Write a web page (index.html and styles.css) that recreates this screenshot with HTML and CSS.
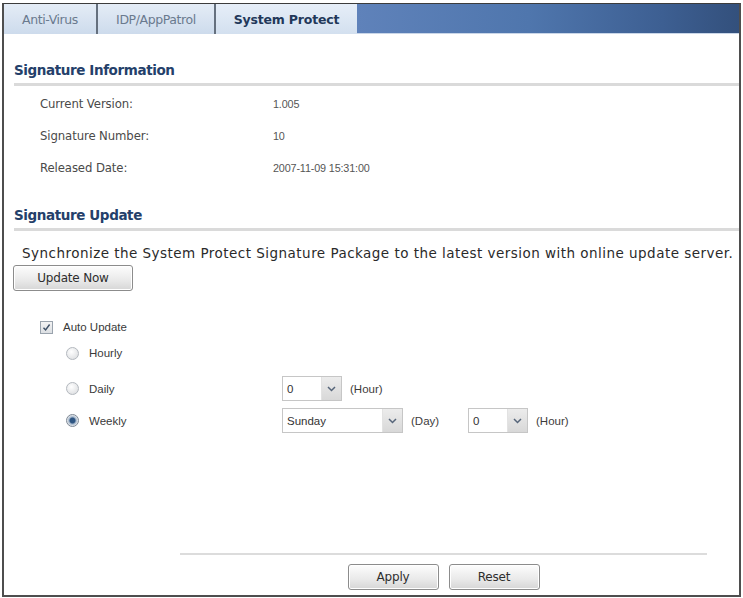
FILE: index.html
```html
<!DOCTYPE html>
<html lang="en">
<head>
    <meta charset="UTF-8">
    <title>System Protect</title>
    <link rel="stylesheet" href="styles.css">
</head>
<body>

<div class="panel">

    <div class="tabs">
        <div class="tab tab-av">Anti-Virus</div>
        <div class="tab tab-idp">IDP/AppPatrol</div>
        <div class="tab tab-sp active">System Protect</div>
        <div class="tab-fill"></div>
    </div>

    <div class="content">

        <h2 class="section-title">Signature Information</h2>
        <div class="info-row"><span class="info-label">Current Version:</span><span class="info-val">1.005</span></div>
        <div class="info-row"><span class="info-label">Signature Number:</span><span class="info-val">10</span></div>
        <div class="info-row"><span class="info-label">Released Date:</span><span class="info-val">2007-11-09 15:31:00</span></div>

        <h2 class="section-title title-update">Signature Update</h2>
        <p class="sync-text">Synchronize the System Protect Signature Package to the latest version with online update server.</p>
        <button type="button" class="btn btn-update">Update Now</button>

        <div class="auto-row">
            <span class="checkbox checked">
                <svg width="9" height="9" viewBox="0 0 9 9"><path d="M1.5 4.8 L3.6 7 L7.6 1.5" fill="none" stroke="#3d4f66" stroke-width="1.4"/></svg>
            </span>
            <span>Auto Update</span>
        </div>

        <div class="sched">
            <div class="sched-row row-hourly">
                <div class="opt"><span class="radio"></span>Hourly</div>
            </div>
            <div class="sched-row row-daily">
                <div class="opt"><span class="radio"></span>Daily</div>
                <div class="ctrls">
                    <div class="select sel-small"><span class="sel-val">0</span><span class="sel-arrow"><svg width="9" height="6" viewBox="0 0 9 6"><path d="M1 1 L4.5 4.5 L8 1" fill="none" stroke="#56657a" stroke-width="1.5"/></svg></span></div>
                    <span class="unit">(Hour)</span>
                </div>
            </div>
            <div class="sched-row row-weekly">
                <div class="opt"><span class="radio selected"></span>Weekly</div>
                <div class="ctrls">
                    <div class="select sel-wide"><span class="sel-val">Sunday</span><span class="sel-arrow"><svg width="9" height="6" viewBox="0 0 9 6"><path d="M1 1 L4.5 4.5 L8 1" fill="none" stroke="#56657a" stroke-width="1.5"/></svg></span></div>
                    <span class="unit unit-day">(Day)</span>
                    <div class="select sel-small"><span class="sel-val">0</span><span class="sel-arrow"><svg width="9" height="6" viewBox="0 0 9 6"><path d="M1 1 L4.5 4.5 L8 1" fill="none" stroke="#56657a" stroke-width="1.5"/></svg></span></div>
                    <span class="unit">(Hour)</span>
                </div>
            </div>
        </div>

    </div>

    <div class="footer">
        <div class="footer-line"></div>
        <div class="footer-btns">
            <button type="button" class="btn btn-foot">Apply</button>
            <button type="button" class="btn btn-foot">Reset</button>
        </div>
    </div>

</div>

</body>
</html>
```

FILE: styles.css
```css
body {
    margin: 0;
    background: #ffffff;
    font-family: "Liberation Sans", Arial, sans-serif;
    font-size: 11.5px;
    color: #3a3a3a;
}

.panel {
    box-sizing: border-box;
    margin: 3px 0 0 2px;
    width: 739px;
    height: 594px;
    border: 2px solid #4e4e4e;
    border-top: 1px solid #3c3c3c;
    display: flex;
    flex-direction: column;
}

/* tab strip */
.tabs {
    display: flex;
    height: 30px;
}
.tab {
    display: flex;
    align-items: center;
    justify-content: center;
    background: linear-gradient(#e4ecf6, #cddbec);
    color: #6a7a8e;
    border-right: 2px solid #65707e;
    font-family: "DejaVu Sans", Verdana, sans-serif;
    font-size: 12.5px;
    letter-spacing: -0.4px;
}
.tab-av { width: 92px; }
.tab-idp { width: 116px; }
.tab-sp { width: 141px; border-right: none; }
.tab.active {
    font-weight: bold;
    color: #22385a;
    font-size: 12.5px;
    letter-spacing: -0.2px;
    background: linear-gradient(#e6eef8, #d3e0ef);
}
.tab-fill {
    flex: 1;
    background: linear-gradient(90deg, #5f82ba, #4f76ad 45%, #3d5f92 80%, #33507c);
    border-bottom: 1px solid #c9d6e8;
}

.content {
    flex: 1;
    padding: 0 0 0 10px;
}

.section-title {
    margin: 28px 0 0 0;
    padding: 0 0 5px 0;
    font-family: "DejaVu Sans", Verdana, sans-serif;
    font-size: 13.5px;
    line-height: 16px;
    font-weight: bold;
    color: #24406a;
    border-bottom: 3px solid #dadada;
    letter-spacing: -0.4px;
}
.title-update { margin-top: 23px; }

.info-row {
    display: flex;
    height: 32px;
    align-items: center;
    padding-left: 26px;
    color: #4a4a4a;
}
.info-row:first-of-type { margin-top: 2px; }
.info-label {
    width: 233px;
    font-family: "DejaVu Sans", Verdana, sans-serif;
    font-size: 11.7px;
    letter-spacing: -0.1px;
}
.info-val { font-size: 10.8px; letter-spacing: -0.15px; color: #555555; }

.sync-text {
    margin: 14px 0 0 8px;
    font-family: "DejaVu Sans", Verdana, sans-serif;
    font-size: 13.5px;
    letter-spacing: 0.47px;
    line-height: 16px;
    color: #2a2a2a;
    white-space: nowrap;
}

.btn {
    font-family: "DejaVu Sans", Verdana, sans-serif;
    font-size: 12px;
    letter-spacing: -0.2px;
    color: #2e2e2e;
    height: 26px;
    border: 1px solid #8c8c8c;
    border-radius: 3px;
    background: linear-gradient(#fdfdfd, #e9e9e9 60%, #d6d6d6);
    box-shadow: inset 0 0 0 1px #ffffff;
    padding: 0;
}
.btn-update {
    margin: 4px 0 0 -1px;
    width: 120px;
}

.auto-row {
    display: flex;
    align-items: center;
    height: 18px;
    margin: 27px 0 0 26px;
    gap: 10px;
}
.checkbox {
    box-sizing: border-box;
    width: 13px;
    height: 13px;
    border: 1px solid #9aa3ad;
    background: linear-gradient(#f3f3f3, #dcdfe3);
    display: flex;
    align-items: center;
    justify-content: center;
}

.sched {
    margin-left: 52px;
}
.sched-row {
    display: grid;
    grid-template-columns: 216px auto;
    align-items: center;
}
.row-hourly { height: 18px; margin-top: 8px; }
.row-daily { height: 25px; margin-top: 14px; }
.row-weekly { height: 25px; margin-top: 7px; }
.opt {
    display: flex;
    align-items: center;
    gap: 10px;
}
.radio {
    box-sizing: border-box;
    width: 13px;
    height: 13px;
    border-radius: 50%;
    border: 1px solid #b3b8be;
    background: radial-gradient(circle at 40% 35%, #ffffff, #d7d9dc);
}
.radio.selected {
    border-color: #7d8794;
    background: radial-gradient(circle, #2f5683 0 2.5px, #9fb2c8 3.5px, #e9ecef 5.5px);
}

.ctrls {
    display: flex;
    align-items: center;
}
.select {
    box-sizing: border-box;
    display: flex;
    height: 25px;
    border: 1px solid #c6c6c6;
    background: #ffffff;
}
.sel-small { width: 60px; }
.sel-wide { width: 121px; }
.sel-val {
    flex: 1;
    display: flex;
    align-items: center;
    padding-left: 4px;
    color: #333333;
}
.sel-arrow {
    width: 19px;
    display: flex;
    align-items: center;
    justify-content: center;
    background: linear-gradient(#ececec, #d8d8d8);
    border-left: 1px solid #e2e2e2;
}
.unit { margin-left: 8px; color: #3c3c3c; }
.unit-day { width: 57px; }

.footer {
    margin: 0 32px 0 176px;
    padding-bottom: 5px;
}
.footer-line {
    height: 2px;
    background: #dcdcdc;
}
.footer-btns {
    display: flex;
    justify-content: center;
    gap: 10px;
    margin-top: 9px;
}
.btn-foot { width: 91px; }
```
